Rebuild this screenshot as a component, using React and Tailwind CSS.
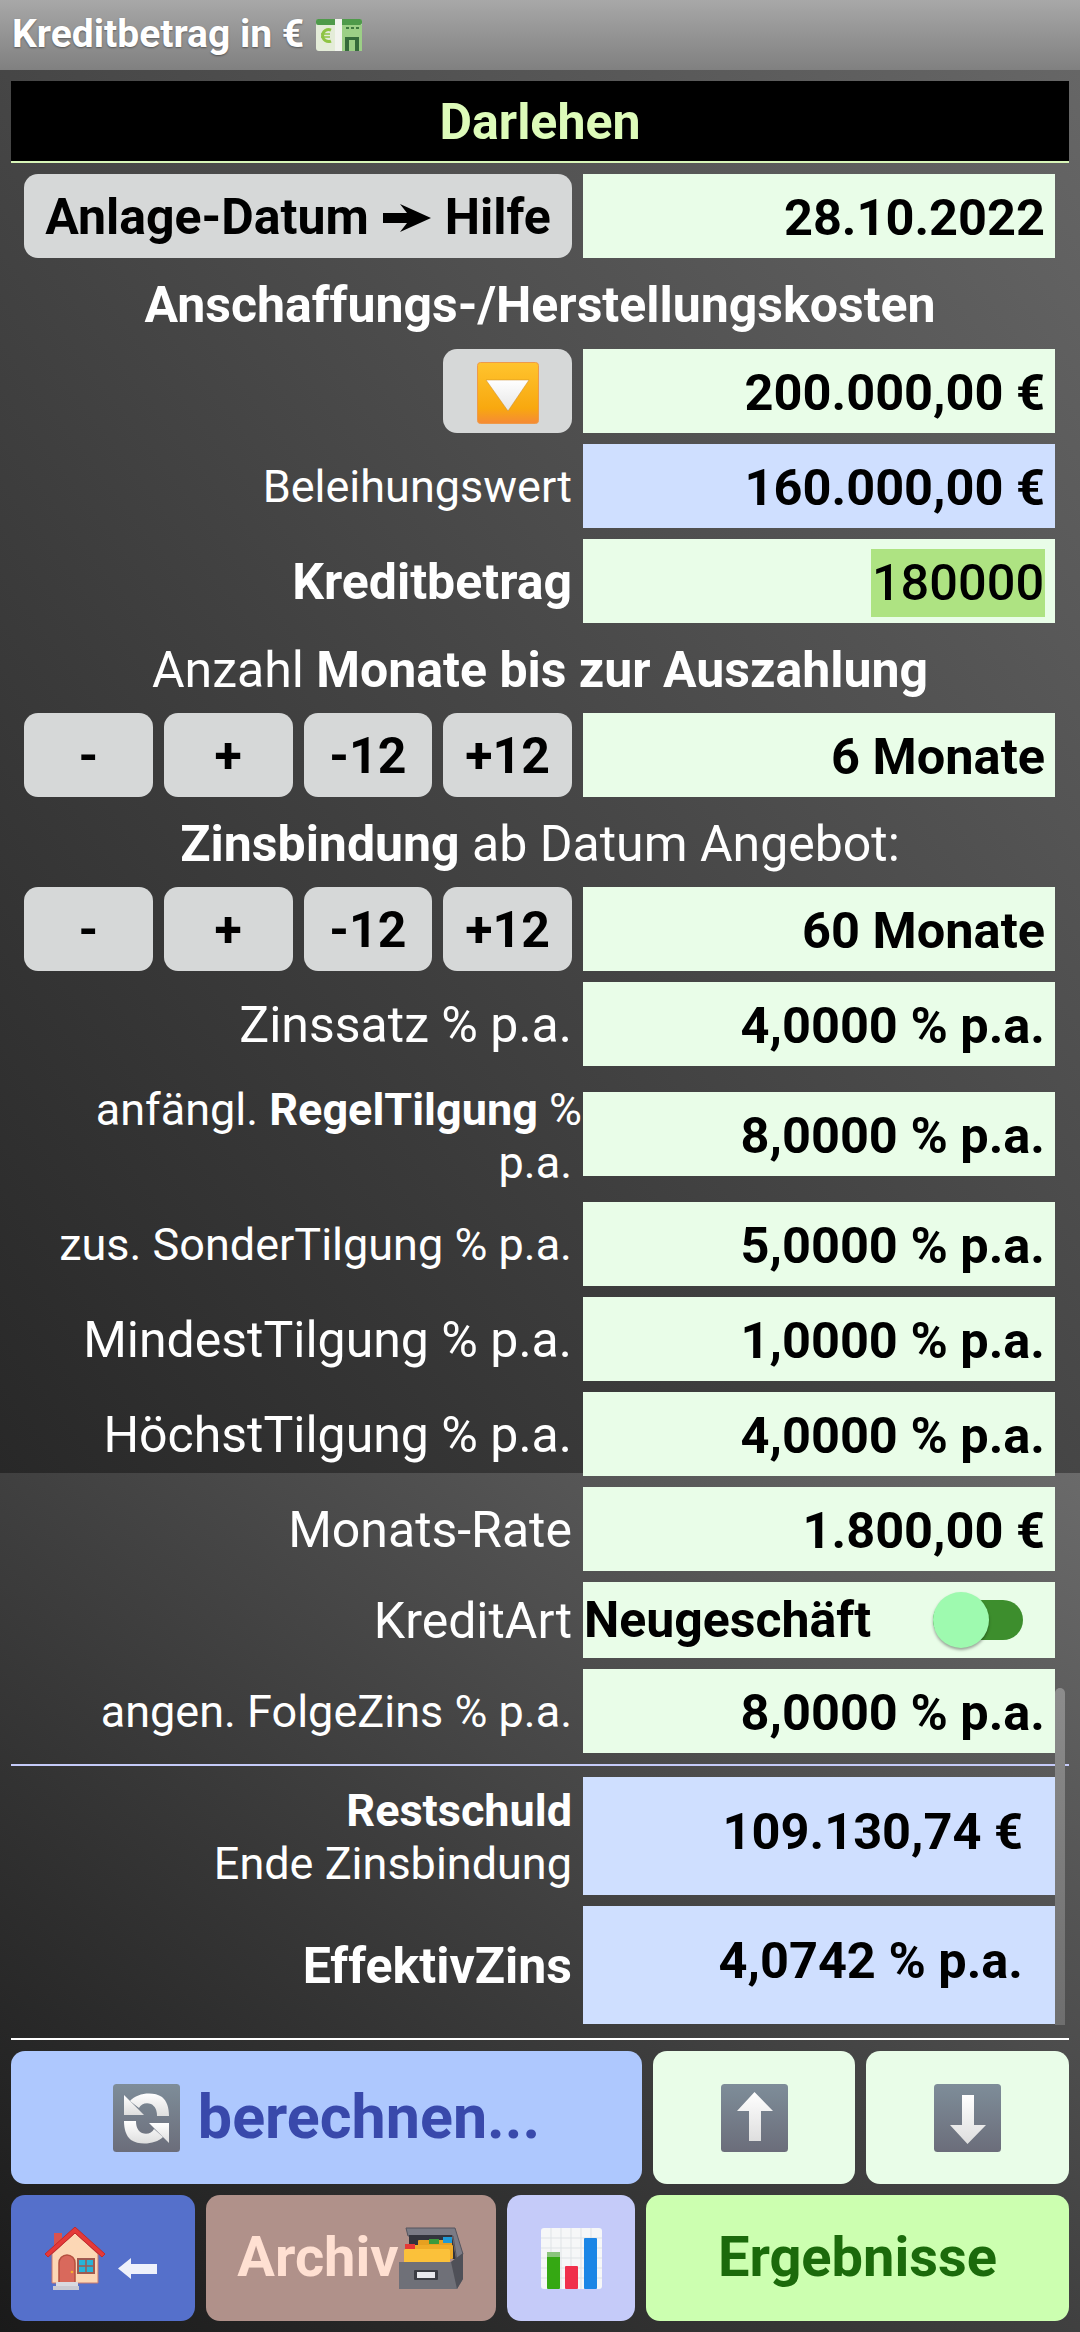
import React from "react";

// --- drawn emoji ---
const Banknote = () => (
  <svg width="46" height="32" viewBox="0 0 46 32">
    <rect x="0" y="0" width="46" height="32" rx="3" fill="#e4ecd8" />
    <rect x="0" y="0" width="46" height="6" rx="2" fill="#4f9a4a" />
    <rect x="26" y="6" width="20" height="26" fill="#9ccf86" />
    <rect x="19" y="0" width="7" height="32" fill="#f2f4ee" />
    <path d="M15 11 a6 6 0 1 0 0 11" fill="none" stroke="#8fc443" strokeWidth="3" />
    <path d="M5 15 h9 M5 18 h9" stroke="#8fc443" strokeWidth="1.5" />
    <path d="M30 9 h3 M35 9 h3 M40 9 h3" stroke="#3f7a3f" strokeWidth="2" />
    <path d="M29 32 v-14 h4 v14 z M39 32 v-14 h4 v14 z" fill="#356b3a" />
    <path d="M29 18 h14 v3 h-14 z" fill="#356b3a" />
  </svg>
);

const OrangeDown = () => (
  <svg width="62" height="62" viewBox="0 0 62 62">
    <defs>
      <linearGradient id="orangeBox" x1="0" y1="0" x2="0" y2="1">
        <stop offset="0" stopColor="#ffc42e" />
        <stop offset="0.75" stopColor="#f8a80f" />
        <stop offset="1" stopColor="#f58a36" />
      </linearGradient>
      <linearGradient id="whiteTri" x1="0" y1="0" x2="0" y2="1">
        <stop offset="0" stopColor="#ffffff" />
        <stop offset="1" stopColor="#e6e6e6" />
      </linearGradient>
    </defs>
    <rect x="0.5" y="0.5" width="61" height="61" rx="3" fill="url(#orangeBox)" stroke="#ee9a4a" />
    <path d="M9 18 H52 L31 49 Z" fill="url(#whiteTri)" stroke="#c98a2a" strokeWidth="0.5" strokeLinejoin="round" />
  </svg>
);

const GrayBox = ({ children, id }) => (
  <svg width="67" height="68" viewBox="0 0 67 68">
    <defs>
      <linearGradient id={id} x1="0" y1="0" x2="0" y2="1">
        <stop offset="0" stopColor="#7e8d99" />
        <stop offset="1" stopColor="#6b6d7a" />
      </linearGradient>
      <linearGradient id={id + "W"} x1="0" y1="0" x2="0" y2="1">
        <stop offset="0" stopColor="#ffffff" />
        <stop offset="1" stopColor="#dedede" />
      </linearGradient>
    </defs>
    <rect x="0" y="0" width="67" height="68" rx="3.5" fill={`url(#${id})`} />
    <g fill={`url(#${id}W)`}>{children}</g>
  </svg>
);

const RefreshIcon = () => (
  <GrayBox id="refreshBox">
    <path d="M11 11 L31 31 L11 31 Z" />
    <path d="M17 17 C24 9 40 7 49 13 C54 17 56 24 56 32 L44 32 C44 26 42 22 38 20 C33 18 28 20 26 24 Z" />
    <path d="M56 59 L36 39 L56 39 Z" />
    <path d="M50 53 C43 60 27 62 18 56 C13 52 11 45 11 37 L23 37 C23 43 25 47 29 49 C34 51 39 49 41 45 Z" />
  </GrayBox>
);

const UpIcon = () => (
  <GrayBox id="upBox">
    <path d="M33.5 8 L52 27 H40 V57 H28 V27 H16 Z" />
  </GrayBox>
);

const DownIcon = () => (
  <GrayBox id="downBox">
    <path d="M28 11 H40 V41 H52 L33.5 60 L16 41 H28 Z" />
  </GrayBox>
);

const HouseIcon = () => (
  <svg width="62" height="63" viewBox="0 0 62 63">
    <rect x="10" y="6" width="8" height="16" fill="#d9534f" />
    <path d="M8 27 L31 6 L54 27 V56 H8 Z" fill="#fcd7b5" stroke="#c9786c" strokeWidth="1" />
    <path d="M1 27 L31 0 L61 27 L58 30 L31 6 L4 30 Z" fill="#e53a3a" stroke="#c62828" strokeWidth="1" strokeLinejoin="round" />
    <path d="M15 56 V36 a8 8 0 0 1 16 0 V56 Z" fill="#d9695c" stroke="#b5503f" strokeWidth="1.5" />
    <circle cx="28" cy="45" r="1.3" fill="#f5b02e" />
    <rect x="34" y="32" width="16" height="14" fill="#26b5d9" stroke="#a05a50" strokeWidth="2" />
    <path d="M42 32 v14 M34 39 h16" stroke="#a05a50" strokeWidth="1.5" />
    <rect x="12" y="55" width="22" height="4" fill="#d9d9e0" />
    <rect x="9" y="59" width="26" height="4" fill="#c9c9d2" />
  </svg>
);

const BackArrow = () => (
  <svg width="39" height="21" viewBox="0 0 39 21">
    <path d="M0 10.5 L13 0 V6 H39 V16 H13 V21 Z" fill="#eef1fb" />
  </svg>
);

const ArchiveIcon = () => (
  <svg width="66" height="62" viewBox="0 0 66 62">
    <path d="M7 1 H56 L64 27 L58 34 L54 9 H9 Z" fill="#7b7b85" stroke="#55555e" strokeWidth="1" />
    <path d="M10 8 H53 L57 32 H10 Z" fill="#33343c" />
    <rect x="19" y="13" width="34" height="12" rx="1" fill="#e7a020" />
    <rect x="44" y="10" width="9" height="6" fill="#1f9ad6" />
    <rect x="30" y="12" width="10" height="5" fill="#3c9a3c" />
    <rect x="6" y="18" width="48" height="14" rx="1" fill="#f0ac28" />
    <rect x="6" y="17" width="10" height="5" fill="#e53935" />
    <rect x="5" y="22" width="46" height="14" rx="1.5" fill="#fbc13a" />
    <path d="M0 35 H52 L64 26 V52 L58 62 H0 Z" fill="#6f7078" />
    <path d="M52 35 L64 26 V52 L58 62 Z" fill="#4f5058" />
    <rect x="15" y="43" width="24" height="10" rx="1" fill="#3c3d44" />
    <rect x="18" y="45" width="18" height="6" fill="#e9e9ee" />
  </svg>
);

const ChartIcon = () => (
  <svg width="61" height="61" viewBox="0 0 61 61">
    <rect width="61" height="61" rx="3" fill="#f6f7f8" />
    <path d="M0 10 H61 M0 20 H61 M0 30 H61 M0 40 H61 M0 50 H61 M10 0 V61 M20 0 V61 M30 0 V61 M40 0 V61 M50 0 V61" stroke="#dfe3e6" strokeWidth="1" />
    <rect x="6" y="24" width="13" height="37" rx="1" fill="#35a813" />
    <rect x="6" y="24" width="13" height="5" fill="#8ac47c" />
    <rect x="24" y="38" width="13" height="23" rx="1" fill="#f0304c" />
    <rect x="43" y="10" width="13" height="51" rx="1" fill="#1b86e6" />
  </svg>
);

// --- form pieces ---
const Row = ({ children, className = "h-[84px]" }) => (
  <div className={`flex shrink-0 items-center gap-[11px] pl-[24px] pr-[25px] ${className}`}>{children}</div>
);

const Label = ({ children, small }) => (
  <div className={`w-[548px] shrink-0 pt-[3px] text-right text-white ${small ? "text-[45px]" : "text-[50px]"}`}>{children}</div>
);

const Field = ({ children, blue, className = "h-[84px] justify-end pr-[10px] pt-[3px]" }) => (
  <div
    className={`flex flex-1 items-center text-[50.5px] font-bold text-black ${blue ? "bg-[#cfdfff]" : "bg-[#e9fde8]"} ${className}`}
  >
    {children}
  </div>
);

const GrayButton = ({ children, className = "" }) => (
  <button className={`flex h-[84px] items-center justify-center rounded-[14px] bg-[#d6d8d8] pt-[3px] text-[50px] font-bold text-black ${className}`}>
    {children}
  </button>
);

const Stepper = ({ value }) => (
  <Row>
    <div className="grid w-[548px] shrink-0 grid-cols-4 gap-[11px]">
      <GrayButton>-</GrayButton>
      <GrayButton>+</GrayButton>
      <GrayButton>-12</GrayButton>
      <GrayButton>+12</GrayButton>
    </div>
    <Field>{value}</Field>
  </Row>
);

const Heading = ({ children, className = "h-[68px]" }) => (
  <div className={`flex shrink-0 items-center justify-center pt-[4px] text-[50px] text-white ${className}`}>{children}</div>
);

const ActionButton = ({ children, className }) => (
  <button className={`flex items-center justify-center rounded-[14px] ${className}`}>{children}</button>
);

export default function App() {
  return (
    <div className="relative flex h-[2332px] w-[1080px] flex-col overflow-hidden bg-[#333] font-[Roboto,sans-serif] leading-[1.17]">
      {/* Title bar */}
      <div className="flex h-[70px] shrink-0 items-center gap-[12px] bg-linear-to-b from-[#a8a8a8] to-[#808080] pl-[12px]">
        <span className="text-[39px] font-bold text-white [text-shadow:0_1px_2px_rgba(0,0,0,0.4)]">Kreditbetrag in €</span>
        <Banknote />
      </div>

      {/* Upper part of the form */}
      <div className="relative z-10 flex h-[1403px] shrink-0 flex-col bg-linear-to-tr from-[#282828] to-[#666666] pt-[11px]">
        <div className="mx-[11px] flex h-[82px] shrink-0 items-center justify-center border-b-2 border-[#d8f5b8] bg-black pt-[3px] text-[50px] font-bold text-[#ddfbb9]">
          Darlehen
        </div>
        <div className="mt-[11px] flex shrink-0 flex-col gap-[11px]">
          <Row>
            <GrayButton className="w-[548px] shrink-0 gap-[14px]">
              <span>Anlage-Datum</span>
              <svg width="48" height="28" viewBox="0 0 48 28">
                <path d="M0 9 H24 L17 0 L48 14 L17 28 L24 19 H0 Z" fill="#000" />
              </svg>
              <span>Hilfe</span>
            </GrayButton>
            <Field>28.10.2022</Field>
          </Row>
          <Heading className="h-[69px]">
            <span className="font-bold">Anschaffungs-/Herstellungskosten</span>
          </Heading>
          <Row>
            <div className="flex w-[548px] shrink-0 justify-end">
              <GrayButton className="w-[129px]">
                <OrangeDown />
              </GrayButton>
            </div>
            <Field>200.000,00 €</Field>
          </Row>
          <Row>
            <Label small>Beleihungswert</Label>
            <Field blue>160.000,00 €</Field>
          </Row>
          <Row>
            <Label>
              <span className="font-bold">Kreditbetrag</span>
            </Label>
            <Field>
              <span className="flex h-[68px] w-[174px] items-center justify-center bg-[#aee382] font-medium">180000</span>
            </Field>
          </Row>
          <Heading>
            <span>
              Anzahl <span className="font-bold">Monate bis zur Auszahlung</span>
            </span>
          </Heading>
          <Stepper value="6 Monate" />
          <Heading>
            <span>
              <span className="font-bold">Zinsbindung</span> ab Datum Angebot:
            </span>
          </Heading>
          <Stepper value="60 Monate" />
          <Row>
            <Label>Zinssatz % p.a.</Label>
            <Field>4,0000 % p.a.</Field>
          </Row>
          <Row className="h-[114px]">
            <Label small>
              <div className="-mr-[10px] leading-[53px]">
                anfängl. <span className="font-bold">RegelTilgung</span> %
              </div>
              <div className="leading-[53px]">p.a.</div>
            </Label>
            <Field>8,0000 % p.a.</Field>
          </Row>
          <Row>
            <Label small>zus. SonderTilgung % p.a.</Label>
            <Field>5,0000 % p.a.</Field>
          </Row>
          <Row>
            <Label>MindestTilgung % p.a.</Label>
            <Field>1,0000 % p.a.</Field>
          </Row>
          <Row>
            <Label>HöchstTilgung % p.a.</Label>
            <Field>4,0000 % p.a.</Field>
          </Row>
        </div>
      </div>

      {/* Lower part of the form and the action buttons */}
      <div className="relative flex flex-1 flex-col bg-linear-to-tr from-[#1a1a1a] to-[#6a6a6a] pt-[14px]">
        <div className="flex flex-col gap-[11px]">
          <Row>
            <Label>Monats-Rate</Label>
            <Field>1.800,00 €</Field>
          </Row>
          <Row className="h-[76px]">
            <Label>KreditArt</Label>
            <Field className="h-[76px] justify-between pl-[1px] pr-[32px]">
              <span className="text-[50px]">Neugeschäft</span>
              <span className="relative h-[40px] w-[90px] rounded-full bg-[#3d8e2d]">
                <span className="absolute left-0 -top-[8px] h-[56px] w-[56px] rounded-full bg-[#9efaaf] shadow-[0_2px_3px_rgba(0,0,0,0.35)]" />
              </span>
            </Field>
          </Row>
          <Row>
            <Label small>angen. FolgeZins % p.a.</Label>
            <Field>8,0000 % p.a.</Field>
          </Row>
          <div className="mx-[11px] h-[2px] bg-[#c5cbf9]" />
          <Row className="h-[118px]">
            <Label small>
              <div className="font-bold">Restschuld</div>
              <div>Ende Zinsbindung</div>
            </Label>
            <Field blue className="h-[118px] justify-end pb-[8px] pr-[32px]">
              109.130,74 €
            </Field>
          </Row>
          <Row className="h-[118px]">
            <Label>
              <span className="font-bold">EffektivZins</span>
            </Label>
            <Field blue className="h-[118px] justify-end pb-[8px] pr-[32px]">
              4,0742 % p.a.
            </Field>
          </Row>
        </div>

        <div className="mx-[11px] mt-[14px] h-[2px] bg-white" />

        <div className="mx-[11px] mt-[11px] flex h-[133px] gap-[11px]">
          <ActionButton className="w-[631px] gap-[18px] bg-[#aec8fe]">
            <RefreshIcon />
            <span className="text-[61px] font-bold text-[#3949ab]">berechnen...</span>
          </ActionButton>
          <ActionButton className="w-[202px] bg-[#e9fde8]">
            <UpIcon />
          </ActionButton>
          <ActionButton className="flex-1 bg-[#e9fde8]">
            <DownIcon />
          </ActionButton>
        </div>

        <div className="mx-[11px] mt-[11px] flex h-[126px] gap-[11px]">
          <ActionButton className="w-[184px] gap-[12px] bg-[#5570cb] pr-[6px]">
            <HouseIcon />
            <span className="mt-[20px]">
              <BackArrow />
            </span>
          </ActionButton>
          <ActionButton className="w-[290px] bg-[#b0918a]">
            <span className="text-[56px] font-bold text-[#ffe0d2]">Archiv</span>
            <ArchiveIcon />
          </ActionButton>
          <ActionButton className="w-[128px] bg-[#c5cbf9]">
            <ChartIcon />
          </ActionButton>
          <ActionButton className="flex-1 bg-[#ccffb0]">
            <span className="text-[56px] font-bold text-[#1b6a0b]">Ergebnisse</span>
          </ActionButton>
        </div>

        {/* Overlay scrollbar */}
        <div className="absolute left-[1055px] top-[215px] h-[337px] w-[10px] rounded-t-full bg-linear-to-b from-[#8c8c8c] to-[#6e6e6e]" />
      </div>
    </div>
  );
}
